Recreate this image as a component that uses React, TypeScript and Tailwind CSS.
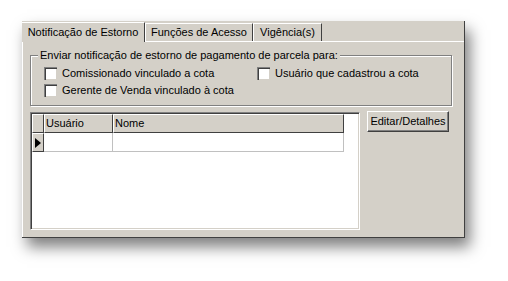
import React from "react";

const font = { fontFamily: '"Liberation Sans", Arial, sans-serif' };

function Check({ label }: { label: string }) {
  return (
    <div className="flex items-center h-[17px]">
      <div className="w-[13px] h-[13px] bg-white border-t border-l border-[#808080] border-r-white border-b-white shadow-[inset_1px_1px_0_#404040,inset_-1px_-1px_0_#d4d0c8]" />
      <span className="ml-[5px] leading-none">{label}</span>
    </div>
  );
}

export default function App() {
  return (
    <div className="w-[508px] h-[281px] bg-white overflow-hidden text-[11px] text-black" style={font}>
      <div className="ml-[22px] mt-[21px] w-[443px] h-[217px] bg-[#d4d0c8] flex flex-col border-r border-b border-[#404040] shadow-[5px_9px_14px_rgba(0,0,0,0.5)]">
        {/* tabs */}
        <div className="h-[20px] flex items-end shrink-0">
          <div className="w-[123px] h-[20px] border-t border-white border-r border-r-[#404040] flex items-center justify-center pb-[1px] relative z-10 -mb-px bg-[#d4d0c8]">
            Notificação de Estorno
          </div>
          <div className="w-[108px] h-[18px] border-t border-l border-white border-r border-r-[#404040] flex items-center justify-center">
            Funções de Acesso
          </div>
          <div className="w-[69px] h-[18px] border-t border-l border-white border-r border-r-[#404040] flex items-center justify-center">
            Vigência(s)
          </div>
        </div>
        {/* sheet */}
        <div className="flex-1 border-t border-l border-white pl-[7px] pt-[13px]">
          <div className="relative w-[422px] h-[51px] border border-[#808080] shadow-[inset_1px_1px_0_#ffffff,1px_1px_0_#ffffff]">
            <div className="absolute left-[7px] -top-[7px] bg-[#d4d0c8] px-[2px] leading-[13px]">
              Enviar notificação de estorno de pagamento de parcela para:
            </div>
            <div className="pl-[13px] pt-[9px] grid grid-cols-[213px_1fr]">
              <Check label="Comissionado vinculado a cota" />
              <Check label="Usuário que cadastrou a cota" />
              <Check label="Gerente de Venda vinculado à cota" />
            </div>
          </div>
          <div className="flex mt-[6px]">
            <div className="w-[330px] h-[118px] bg-white border-t border-l border-[#808080] border-r-white border-b-white border-r border-b shadow-[inset_1px_1px_0_#404040,inset_-1px_-1px_0_#d4d0c8] p-[1px]">
              <div className="flex">
                <div className="w-[12px] h-[19px] bg-[#d4d0c8] border-t border-l border-white border-r border-b border-r-[#404040] border-b-[#404040]" />
                <div className="w-[69px] h-[19px] bg-[#d4d0c8] border-t border-l border-white border-r border-b border-r-[#404040] border-b-[#404040] flex items-center pl-[1px]">
                  Usuário
                </div>
                <div className="w-[231px] h-[19px] bg-[#d4d0c8] border-t border-l border-white border-r border-b border-r-[#404040] border-b-[#404040] flex items-center pl-[1px]">
                  Nome
                </div>
              </div>
              <div className="flex">
                <div className="w-[12px] h-[19px] bg-[#d4d0c8] border-t border-l border-white border-r border-b border-r-[#404040] border-b-[#404040] flex items-center justify-center">
                  <svg width="6" height="10" viewBox="0 0 6 10"><polygon points="0,0 6,5 0,10" fill="#000" /></svg>
                </div>
                <div className="w-[69px] h-[19px] border-r border-b border-[#c0c0c0]" />
                <div className="w-[231px] h-[19px] border-r border-b border-[#c0c0c0]" />
              </div>
            </div>
            <div className="ml-[7px] -mt-[1px] w-[82px] h-[21px] border-t border-l border-white border-r border-b border-r-[#404040] border-b-[#404040] shadow-[inset_-1px_-1px_0_#808080] flex items-center justify-center">
              Editar/Detalhes
            </div>
          </div>
        </div>
      </div>
    </div>
  );
}
